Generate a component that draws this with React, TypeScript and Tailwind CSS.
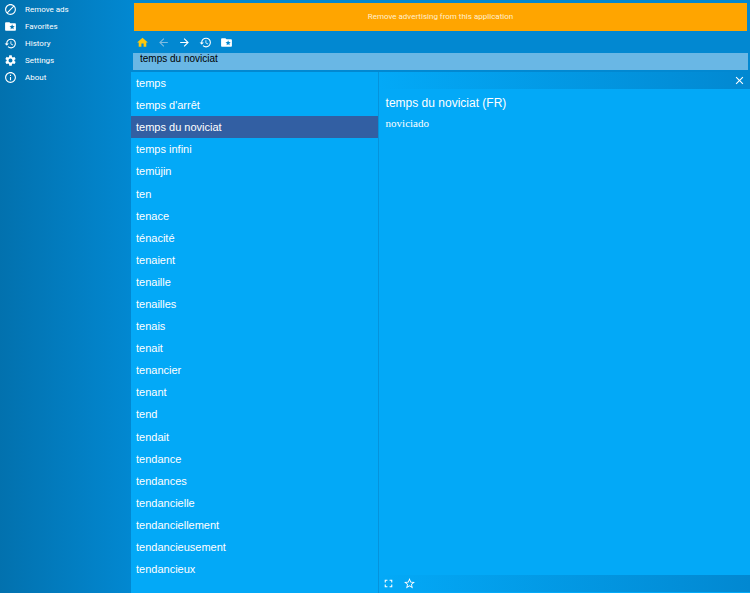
import { useState } from 'react';
import {
    MdArrowBack,
    MdArrowForward,
    MdBlock,
    MdClose,
    MdFolderSpecial,
    MdFullscreen,
    MdHistory,
    MdHome,
    MdInfoOutline,
    MdSettings,
    MdStarBorder,
} from 'react-icons/md';

const menu = [
    { label: 'Remove ads', icon: MdBlock },
    { label: 'Favorites', icon: MdFolderSpecial },
    { label: 'History', icon: MdHistory },
    { label: 'Settings', icon: MdSettings },
    { label: 'About', icon: MdInfoOutline },
];

const toolbar = [
    { label: 'Home', icon: MdHome, color: 'text-[#ffc80a]' },
    { label: 'Back', icon: MdArrowBack, color: 'text-[#7fbbe0]' },
    { label: 'Forward', icon: MdArrowForward, color: 'text-white' },
    { label: 'History', icon: MdHistory, color: 'text-white' },
    { label: 'Favorites', icon: MdFolderSpecial, color: 'text-white' },
];

const words = [
    'temps',
    "temps d'arrêt",
    'temps du noviciat',
    'temps infini',
    'temüjin',
    'ten',
    'tenace',
    'ténacité',
    'tenaient',
    'tenaille',
    'tenailles',
    'tenais',
    'tenait',
    'tenancier',
    'tenant',
    'tend',
    'tendait',
    'tendance',
    'tendances',
    'tendancielle',
    'tendanciellement',
    'tendancieusement',
    'tendancieux',
];

function Sidebar() {
    return (
        <nav className="w-[131px] shrink-0 bg-linear-to-r from-[#0271ae] to-[#0288d1] pt-px">
            {menu.map((item) => {
                const Icon = item.icon;

                return (
                    <button
                        key={item.label}
                        type="button"
                        className="flex h-[17px] w-full items-center gap-2 pl-1 font-[Roboto,sans-serif] text-[8px] text-white"
                    >
                        <Icon className="size-[13px]" />
                        {item.label}
                    </button>
                );
            })}
        </nav>
    );
}

export default function App() {
    const [query, setQuery] = useState('temps du noviciat');
    const [selected, setSelected] = useState('temps du noviciat');

    const pick = (word: string) => {
        setSelected(word);
        setQuery(word);
    };

    return (
        <div className="flex min-h-screen bg-[#0288d1] font-['Liberation_Sans',Arial,sans-serif] text-white">
            <Sidebar />

            <div className="flex min-w-0 flex-1 flex-col">
                {/* Ad banner */}
                <button
                    type="button"
                    className="mx-[3px] mt-[3px] h-7 bg-[#ffa500] font-[Roboto,sans-serif] text-[8px] text-[#fff0d0]"
                >
                    Remove advertising from this application
                </button>

                {/* Toolbar */}
                <div className="flex h-[22px] items-center gap-2 pl-[5px]">
                    {toolbar.map((item) => {
                        const Icon = item.icon;

                        return (
                            <button key={item.label} type="button" aria-label={item.label} className={item.color}>
                                <Icon className="size-[13px]" />
                            </button>
                        );
                    })}
                </div>

                <input
                    type="text"
                    aria-label="Search"
                    value={query}
                    onChange={(e) => setQuery(e.target.value)}
                    className="mx-[2px] mb-[2px] h-[17px] bg-[#69b7e5] pb-[6px] pl-[7px] text-[10px] leading-[11px] text-black outline-none"
                />

                <div className="flex flex-1 bg-[#03a9f7]">
                    {/* Word list */}
                    <ul className="flex w-2/5 flex-col border-r border-[#0593dc] pb-[13px]">
                        {words.map((word) => (
                            <li key={word} className="flex flex-1">
                                <button
                                    type="button"
                                    onClick={() => pick(word)}
                                    className={`w-full pl-[5px] text-left text-[11px] leading-[22px] ${word === selected ? 'bg-[#325fa3]' : ''}`}
                                >
                                    {word}
                                </button>
                            </li>
                        ))}
                    </ul>

                    {/* Article */}
                    <section className="flex flex-1 flex-col">
                        <div className="flex h-[17px] items-center justify-end bg-linear-to-r from-[#03a9f7] to-[#0288d1] pr-1">
                            <button type="button" aria-label="Close">
                                <MdClose className="size-[13px]" />
                            </button>
                        </div>
                        <article className="flex-1 px-[7px] pt-[6px]">
                            <h1 className="text-[12px] leading-4">temps du noviciat (FR)</h1>
                            <p className="mt-1 font-['Liberation_Serif',serif] text-[11px] leading-4">noviciado</p>
                        </article>
                        <div className="mb-px flex h-[17px] items-center gap-2 bg-linear-to-r from-[#03a9f7] to-[#0288d1] pl-[3px]">
                            <button type="button" aria-label="Full screen">
                                <MdFullscreen className="size-[13px]" />
                            </button>
                            <button type="button" aria-label="Add to favorites">
                                <MdStarBorder className="size-[13px]" />
                            </button>
                        </div>
                    </section>
                </div>
            </div>
        </div>
    );
}
